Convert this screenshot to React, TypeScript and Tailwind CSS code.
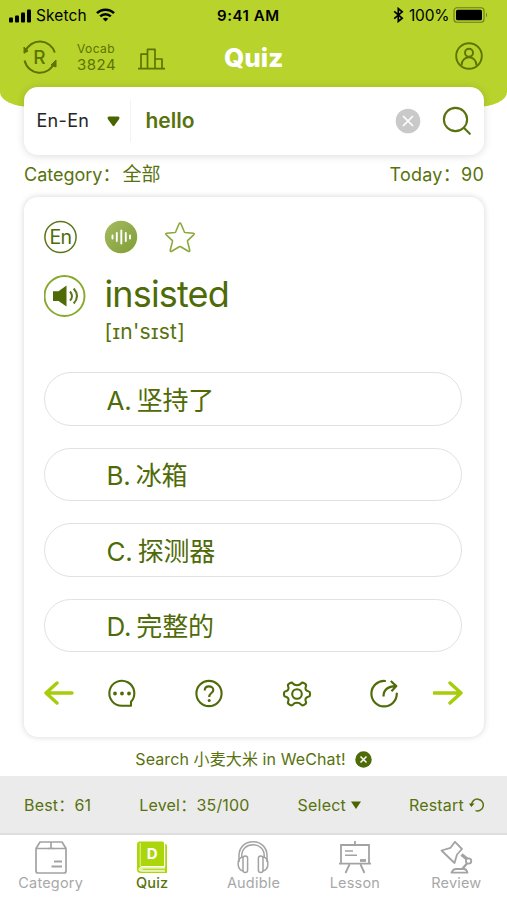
import { useState } from "react";
import type { ReactNode } from "react";

type Tab = {
    label: string;
    icon: ReactNode;
};

const OPTIONS = [
    { key: "A", text: "坚持了" },
    { key: "B", text: "冰箱" },
    { key: "C", text: "探测器" },
    { key: "D", text: "完整的" },
];

const TABS: Tab[] = [
    {
        label: "Category",
        icon: (
            <svg width="34" height="34" viewBox="0 0 34 34" fill="none" stroke="#a3a3a3" strokeWidth="1.7">
                <path d="M2 8.5 L6 2 H28 L32 8.5 V31 Q32 33 30 33 H4 Q2 33 2 31 Z M2 8.5 H14.5 M19.5 8.5 H32 M17 2 V8.5" strokeLinejoin="round" />
                <path d="M14 8.5 H20" />
                <path d="M20 21.5 H28 M17.5 26.5 H28" strokeWidth="2" />
            </svg>
        ),
    },
    {
        label: "Quiz",
        icon: (
            <svg width="34" height="34" viewBox="0 0 34 34" fill="none">
                <path d="M5 1.5 H27.5 Q29 1.5 29 3 V26 H7 Q5 26 5 28 H3 Q2 28 2 26.5 V4.5 Q2 1.5 5 1.5 Z" fill="#acd60c" />
                <path d="M30.2 3.5 Q32 4 32 6 V33 H6 Q2 33 2 29.5 V27 H30.2 Z" fill="#acd60c" />
                <path d="M5.3 3 V26" stroke="#d9ee86" strokeWidth="1.2" />
                <path d="M30 27.2 H6.5 Q3.8 27.5 3.8 29.5 Q4 31 6.5 31.2 H30" fill="#dff09a" stroke="#f4fadb" strokeWidth="1" />
                <path d="M8 29.3 H30" stroke="#acd60c" strokeWidth="1" />
                <text x="17.3" y="19" textAnchor="middle" fontSize="15" fontWeight="700" fill="#fff" fontFamily="Inter, sans-serif">D</text>
            </svg>
        ),
    },
    {
        label: "Audible",
        icon: (
            <svg width="34" height="34" viewBox="0 0 34 34" fill="none" stroke="#a3a3a3" strokeWidth="1.5">
                <path d="M3 22 V15.5 C3 7.5 9 1.8 17 1.8 C25 1.8 31 7.5 31 15.5 V22" />
                <path d="M5.8 17 V15.5 C5.8 9 10.5 4.8 17 4.8 C23.5 4.8 28.2 9 28.2 15.5 V17" />
                <path d="M7 17 C0.5 18 0.5 29.5 7 31" />
                <path d="M27 17 C33.5 18 33.5 29.5 27 31" />
                <rect x="7" y="16" width="4.6" height="16.5" rx="2.3" />
                <rect x="22.4" y="16" width="4.6" height="16.5" rx="2.3" />
            </svg>
        ),
    },
    {
        label: "Lesson",
        icon: (
            <svg width="34" height="34" viewBox="0 0 34 34" fill="none" stroke="#a3a3a3" strokeWidth="1.8">
                <path d="M3 5 H31 V23.7 H3 Z M1 23.7 H33 M17 1 V5 M11.5 24.5 L7.5 33 M22.5 24.5 L26.5 33" />
                <path d="M7 11 H15 M7 15.3 H19" strokeWidth="1.5" />
                <path d="M22 20.5 H28" strokeWidth="2.8" />
            </svg>
        ),
    },
    {
        label: "Review",
        icon: (
            <svg width="34" height="34" viewBox="0 0 34 34" fill="none" stroke="#a3a3a3" strokeWidth="1.8" strokeLinejoin="round">
                <path d="M2.5 10.5 L11.5 7.8 L16 1.8 L23 9 L18 14.5 L15.5 23 Z" />
                <path d="M22.5 14.5 L28 19" strokeWidth="3.4" />
                <circle cx="29.6" cy="21" r="2.7" />
                <path d="M28 23.5 L23 29.2" strokeWidth="2.4" />
                <path d="M12.5 32.7 Q14 29 17 29 H25 Q27.5 29 28.5 32.7 Z" />
            </svg>
        ),
    },
];

function StatusBar() {
    return (
        <div className="flex h-[30px] items-center text-black">
            <svg className="ml-[9px] mt-[1px]" width="23" height="14" viewBox="0 0 23 14">
                <rect x="0" y="8.5" width="4" height="5" rx="1" />
                <rect x="6" y="6.5" width="4" height="7" rx="1" />
                <rect x="12" y="3.5" width="4" height="10" rx="1" />
                <rect x="18" y="0.5" width="4" height="13" rx="1" />
            </svg>
            <span className="ml-[4px] w-[60px] pt-[1px] text-[15.5px] leading-none tracking-[0.1px]">Sketch</span>
            <svg width="19" height="14" viewBox="0 0 19 14" fill="none" stroke="#000" strokeWidth="2.5">
                <path d="M1 5.2 C5.5 0.6 13.5 0.6 18 5.2" />
                <path d="M4.2 8.4 C7.2 5.5 11.8 5.5 14.8 8.4" />
                <path d="M9.5 13.6 L6.7 10.7 Q9.5 8.6 12.3 10.7 Z" fill="#000" stroke="none" />
            </svg>
            <span className="ml-[102px] w-[176px] whitespace-nowrap text-[15px] leading-none font-semibold tracking-[0.55px]">9:41 AM</span>
            <svg width="11" height="16" viewBox="0 0 11 16" fill="none" stroke="#000" strokeWidth="1.7">
                <path d="M1.2 4.3 L9.2 11.2 L5.3 14.4 V1.6 L9.2 4.8 L1.2 11.7" />
            </svg>
            <span className="ml-[5px] w-[44px] pt-[1px] text-[15.5px] leading-none tracking-[-0.2px]">100%</span>
            <svg width="36" height="16" viewBox="0 0 36 16" fill="none">
                <rect x="1" y="0.8" width="30" height="14.4" rx="3" stroke="#6c7d1c" strokeWidth="1.1" />
                <rect x="3" y="2.8" width="26" height="10.4" rx="1.5" fill="#000" />
                <path d="M33 5.5 Q35 8 33 10.5 Z" fill="#6c7d1c" />
            </svg>
        </div>
    );
}

function Header() {
    return (
        <header className="h-[107px] [border-radius:0_0_30px_30px/0_0_15px_15px] bg-[#b7d32c]">
            <StatusBar />
            <div className="flex h-[54px] items-center text-[#5d7400]">
                <svg className="ml-[22px]" width="36" height="36" viewBox="0 0 36 36" fill="none" stroke="#5d7400" strokeWidth="2">
                    <path d="M3.3 12.5 A15.6 15.6 0 0 1 32.8 13.5" />
                    <path d="M2.6 21.5 A15.6 15.6 0 0 0 32.5 23.5" />
                    <path d="M2 8 V14.2 L6 12 Z M34 21 V28 L29 26 Z" fill="#5d7400" strokeWidth="1" />
                    <text x="17.5" y="24.8" textAnchor="middle" fontSize="19" fontWeight="500" stroke="none" fill="#5d7400" fontFamily="Inter, sans-serif">R</text>
                </svg>
                <div className="ml-[19px] flex w-[61px] flex-col">
                    <span className="text-[12px] leading-[15px] tracking-[0.4px]">Vocab</span>
                    <span className="text-[15px] leading-[17px] tracking-[0.5px]">3824</span>
                </div>
                <svg className="mt-[4px]" width="27" height="22" viewBox="0 0 27 22" fill="none" stroke="#5d7400" strokeWidth="1.7">
                    <path d="M0 20.6 H27 M3 20 V6.2 H9.5 M9.5 20 V1.3 H17 V20 M17 11 H24 V20" strokeLinejoin="round" />
                </svg>
                <h1 className="ml-[59px] w-[230px] pt-[2px] text-[26px] leading-none font-extrabold text-white">Quiz</h1>
                <svg className="mb-[2px]" width="30" height="30" viewBox="0 0 30 30" fill="none" stroke="#5d7400" strokeWidth="1.9">
                    <circle cx="15" cy="15" r="12.8" />
                    <circle cx="15" cy="11.8" r="4" />
                    <path d="M7.5 24.5 C7.5 13.5 22.5 13.5 22.5 24.5" />
                </svg>
            </div>
        </header>
    );
}

function SearchBox() {
    const [query, setQuery] = useState("hello");

    return (
        <div className="relative mx-auto -mt-[20px] flex h-[68px] w-[460px] items-center rounded-[14px] bg-white shadow-[0_1px_8px_rgba(0,0,0,0.14)]">
            <button className="ml-[13px] flex w-[93px] items-center text-[18px] leading-none text-[#252525]">
                <span className="w-[70px] pb-[1px] text-left tracking-[0.3px]">En-En</span>
                <svg width="13" height="11" viewBox="0 0 13 11">
                    <path d="M2 0.5 H11 Q13 0.8 12.2 3 L7.5 9.5 Q6.5 10.8 5.5 9.5 L0.8 3 Q0 0.8 2 0.5 Z" fill="#4a6500" />
                </svg>
            </button>
            <input
                value={query}
                onChange={(e) => setQuery(e.target.value)}
                className="h-[42px] w-[265px] border-l border-[#f3f3f3] pb-[2px] pl-[15px] text-[21px] font-semibold text-[#58720d] outline-none"
            />
            <button onClick={() => setQuery("")}>
                <svg width="26" height="26" viewBox="0 0 26 26" fill="none">
                    <circle cx="13" cy="13" r="12.3" fill="#c9c9c9" />
                    <path d="M8 8 L18 18 M18 8 L8 18" stroke="#fff" strokeWidth="1.7" />
                </svg>
            </button>
            <svg className="ml-[21px]" width="30" height="30" viewBox="0 0 30 30" fill="none" stroke="#58720d" strokeWidth="2.1">
                <circle cx="13.5" cy="13.5" r="11.6" />
                <path d="M21.8 21.8 L27.8 27.8" strokeLinecap="round" />
            </svg>
        </div>
    );
}

function WordHeader() {
    return (
        <>
            <div className="flex h-[34px] items-center">
                <svg width="34" height="34" viewBox="0 0 34 34" fill="none">
                    <circle cx="16.5" cy="17" r="15.6" stroke="#5b751c" strokeWidth="1.5" />
                    <text x="16.5" y="23.8" textAnchor="middle" fontSize="19.5" letterSpacing="-0.7" fill="#4f6b08" fontFamily="Inter, sans-serif">En</text>
                </svg>
                <svg className="ml-[26px]" width="34" height="34" viewBox="0 0 34 34" fill="none">
                    <defs>
                        <linearGradient id="wave" x1="0" y1="0" x2="1" y2="1">
                            <stop offset="0" stopColor="#a5bb62" />
                            <stop offset="1" stopColor="#7f9d35" />
                        </linearGradient>
                    </defs>
                    <circle cx="17" cy="17" r="16.2" fill="url(#wave)" />
                    <path d="M8.5 15.5 V18.5 M12.8 13 V21 M17.3 10.5 V23.5 M21.8 13 V21 M26 15.5 V18.5" stroke="#fff" strokeWidth="1.9" strokeLinecap="round" />
                </svg>
                <svg className="ml-[26px]" width="32" height="32" viewBox="0 0 32 32" fill="none" stroke="#8aa83c" strokeWidth="1.6" strokeLinejoin="round">
                    <path d="M16 2 Q16.5 2 17 3 L20.3 10.8 Q20.6 11.4 21.2 11.5 L29.3 12.2 Q31 12.5 29.7 13.8 L23.8 19.3 Q23.4 19.8 23.5 20.4 L25.7 29 Q25.9 31 24.3 30.2 L16.7 25.7 Q16 25.4 15.3 25.7 L7.7 30.2 Q6.1 31 6.3 29 L8.5 20.4 Q8.6 19.8 8.2 19.3 L2.3 13.8 Q1 12.5 2.7 12.2 L10.8 11.5 Q11.4 11.4 11.7 10.8 L15 3 Q15.5 2 16 2 Z" />
                </svg>
            </div>
            <div className="mt-[20px] flex">
                <svg width="42" height="44" viewBox="0 0 42 44" fill="none">
                    <circle cx="20.5" cy="22" r="20" stroke="#87a92d" strokeWidth="1.9" />
                    <path d="M9 17.2 H14.5 L22.5 11.5 V32.5 L14.5 27 H9 Z" fill="#4f6b08" />
                    <path d="M26 17.5 Q30 22 26 26.7 M29.7 14.5 Q36.3 22 29.7 29.5" stroke="#5b751c" strokeWidth="2" />
                </svg>
                <div className="ml-[19px] flex flex-col text-[#4f6b08]">
                    <span className="-mt-[1px] text-[36px] leading-[42px] tracking-[-0.85px]">insisted</span>
                    <span className="mt-[3px] text-[21px] leading-[28px] tracking-[0.3px] text-[#58720d]">[ɪn'sɪst]</span>
                </div>
            </div>
        </>
    );
}

function ActionRow() {
    return (
        <div className="mt-[25px] flex h-[32px] items-center justify-between">
            <svg width="30" height="26" viewBox="0 0 30 26" fill="none" stroke="#a6cc0a" strokeWidth="3.4" strokeLinecap="round" strokeLinejoin="round">
                <path d="M28 13 H2 M13 3 L2 13 L13 23" />
            </svg>
            <svg className="ml-[3px]" width="30" height="30" viewBox="0 0 30 30" fill="none" stroke="#4f6b08" strokeWidth="2.1">
                <path d="M24 23.8 A12.5 12.5 0 1 0 15 27.8 H24 Z" strokeLinejoin="round" />
                <path d="M8 15.5 h.01 M15 15.5 h.01 M22 15.5 h.01" strokeWidth="3.8" strokeLinecap="round" />
            </svg>
            <svg className="ml-[27px]" width="30" height="30" viewBox="0 0 30 30" fill="none" stroke="#4f6b08" strokeWidth="2.1">
                <circle cx="15" cy="15.5" r="12.6" />
                <path d="M10.7 12.5 C10.7 7 19.3 7.2 19.3 12 C19.3 15.2 15.2 15 15.2 19" />
                <circle cx="15.2" cy="22.4" r="1.5" fill="#4f6b08" stroke="none" />
            </svg>
            <svg className="ml-[27px]" width="30" height="30" viewBox="0 0 30 30" fill="none" stroke="#4f6b08" strokeWidth="2.1" strokeLinejoin="round">
                <path d="M8 5.1 Q9.8 3.9 11.1 5.6 C12.5 7.8 17.5 7.8 18.9 5.6 Q20.2 3.9 22 5.1 L23.2 5.9 Q24.6 6.8 23.8 8.6 C22.7 11 24 12.8 26.3 13.2 Q28 13.5 28 15.3 V16.7 Q28 18.5 26.3 18.8 C24 19.2 22.7 21 23.8 23.4 Q24.6 25.2 23.2 26.1 L22 26.9 Q20.2 28.1 18.9 26.4 C17.5 24.2 12.5 24.2 11.1 26.4 Q9.8 28.1 8 26.9 L6.8 26.1 Q5.4 25.2 6.2 23.4 C7.3 21 6 19.2 3.7 18.8 Q2 18.5 2 16.7 V15.3 Q2 13.5 3.7 13.2 C6 12.8 7.3 11 6.2 8.6 Q5.4 6.8 6.8 5.9 Z" />
                <circle cx="15" cy="16" r="4.8" />
            </svg>
            <svg className="ml-[27px]" width="30" height="30" viewBox="0 0 30 30" fill="none" stroke="#4f6b08" strokeWidth="2.2">
                <path d="M16 3 A12.7 12.7 0 1 0 27.8 15.5" strokeLinecap="round" />
                <path d="M14.5 18.5 C14.5 11.5 19 8.3 27 8.1 M21.8 3 L27.3 8.1 L22.5 13.3" strokeLinejoin="round" />
            </svg>
            <svg className="ml-[4px]" width="30" height="26" viewBox="0 0 30 26" fill="none" stroke="#a6cc0a" strokeWidth="3.4" strokeLinecap="round" strokeLinejoin="round">
                <path d="M1 13 H28 M17 3 L28 13 L17 23" />
            </svg>
        </div>
    );
}

export default function App() {
    const [activeTab, setActiveTab] = useState("Quiz");

    return (
        <div className="h-[900px] w-[507px] overflow-hidden bg-white font-['Inter','Noto_Sans_CJK_SC',sans-serif]">
            <Header />
            <SearchBox />

            <div className="flex h-[42px] items-center justify-between pr-[23px] pb-[3px] pl-[24px] text-[18px] leading-none text-[#58720d]">
                <span className="flex items-center">
                    Category：<span className="ml-[2px] text-[19px]">全部</span>
                </span>
                <span className="tracking-[0.25px]">Today：90</span>
            </div>

            <main className="mx-auto h-[540px] w-[460px] rounded-[14px] bg-white px-[20px] pt-[23px] shadow-[0_0_6px_rgba(0,0,0,0.17)]">
                <WordHeader />
                <div className="mt-[26px] flex flex-col gap-[22px] pr-[2px]">
                    {OPTIONS.map((option) => (
                        <button
                            key={option.key}
                            className="flex h-[53.5px] items-center rounded-full border-[1.5px] border-[#e1e1e1] pt-[4px] pl-[62px] text-[26px] leading-none tracking-[-0.2px] [word-spacing:-2px] text-[#4f6b08]"
                        >
                            {option.key}. {option.text}
                        </button>
                    ))}
                </div>
                <ActionRow />
            </main>

            <div className="flex h-[39px] items-center justify-center gap-[9px] pt-[5px] text-[16px] leading-none tracking-[0.1px] text-[#58720d]">
                <span>Search 小麦大米 in WeChat!</span>
                <svg width="17" height="17" viewBox="0 0 17 17" fill="none">
                    <circle cx="8.5" cy="8.5" r="8.2" fill="#4f6b08" />
                    <path d="M5.5 5.5 L11.5 11.5 M11.5 5.5 L5.5 11.5" stroke="#fff" strokeWidth="1.5" />
                </svg>
            </div>

            <div className="flex h-[59px] items-center justify-between border-b-2 border-[#dedede] bg-[#ebebeb] pr-[23px] pl-[24px] text-[16px] leading-none tracking-[0.2px] text-[#58720d]">
                <span>Best：61</span>
                <span>Level：35/100</span>
                <span className="flex items-center gap-[5px]">
                    Select
                    <svg width="10" height="8" viewBox="0 0 10 8">
                        <path d="M0 0.5 H10 L5 8 Z" fill="#4a6500" />
                    </svg>
                </span>
                <span className="flex items-center gap-[5px]">
                    Restart
                    <svg width="15" height="15" viewBox="0 0 15 15" fill="none" stroke="#58720d" strokeWidth="1.5">
                        <path d="M2.5 8 A5.9 5.9 0 1 1 6.5 13.6" />
                        <path d="M0 6.5 H5.5 L2.3 10 Z" fill="#4a6500" stroke="none" />
                    </svg>
                </span>
            </div>

            <nav className="grid h-[64px] grid-cols-5 pt-[5px]">
                {TABS.map((tab) => (
                    <button
                        key={tab.label}
                        onClick={() => setActiveTab(tab.label)}
                        className={`flex flex-col items-center text-[14.5px] leading-[18px] tracking-[0.2px] ${
                            activeTab === tab.label ? "font-medium text-[#58720d]" : "text-[#a8a8a8]"
                        }`}
                    >
                        {tab.icon}
                        {tab.label}
                    </button>
                ))}
            </nav>
        </div>
    );
}
